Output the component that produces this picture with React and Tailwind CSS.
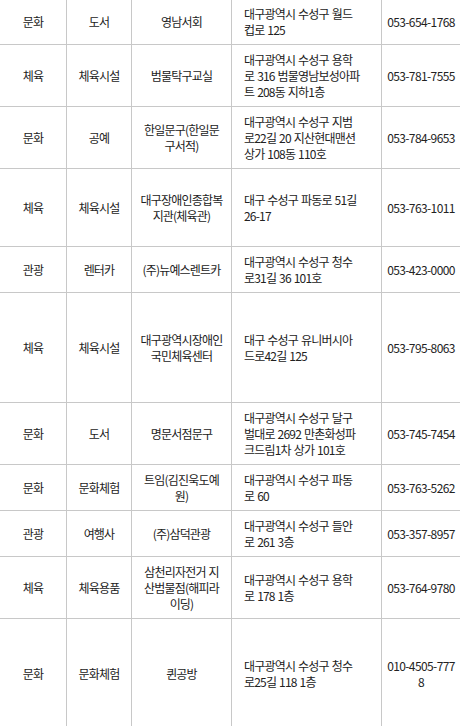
import React from "react";

const rows = [
  { h: "h-[45px]", type: "문화", sub: "도서", name: ["영남서회"], addr: ["대구광역시 수성구 월드", "컵로 125"], tel: ["053-654-1768"] },
  { h: "h-[62px]", type: "체육", sub: "체육시설", name: ["범물탁구교실"], addr: ["대구광역시 수성구 용학", "로 316 범물영남보성아파", "트 208동 지하1층"], tel: ["053-781-7555"] },
  { h: "h-[62px]", type: "문화", sub: "공예", name: ["한일문구(한일문", "구서적)"], addr: ["대구광역시 수성구 지범", "로22길 20 지산현대맨션", "상가 108동 110호"], tel: ["053-784-9653"] },
  { h: "h-[78px]", type: "체육", sub: "체육시설", name: ["대구장애인종합복", "지관(체육관)"], addr: ["대구 수성구 파동로 51길", "26-17"], tel: ["053-763-1011"] },
  { h: "h-[46px]", type: "관광", sub: "렌터카", name: ["(주)뉴예스렌트카"], addr: ["대구광역시 수성구 청수", "로31길 36 101호"], tel: ["053-423-0000"] },
  { h: "h-[110px]", type: "체육", sub: "체육시설", name: ["대구광역시장애인", "국민체육센터"], addr: ["대구 수성구 유니버시아", "드로42길 125"], tel: ["053-795-8063"] },
  { h: "h-[62px]", type: "문화", sub: "도서", name: ["명문서점문구"], addr: ["대구광역시 수성구 달구", "벌대로 2692 만촌화성파", "크드림1차 상가 101호"], tel: ["053-745-7454"] },
  { h: "h-[46px]", type: "문화", sub: "문화체험", name: ["트임(김진욱도예", "원)"], addr: ["대구광역시 수성구 파동", "로 60"], tel: ["053-763-5262"] },
  { h: "h-[46px]", type: "관광", sub: "여행사", name: ["(주)삼덕관광"], addr: ["대구광역시 수성구 들안", "로 261 3층"], tel: ["053-357-8957"] },
  { h: "h-[62px]", type: "체육", sub: "체육용품", name: ["삼천리자전거 지", "산범물점(해피라", "이딩)"], addr: ["대구광역시 수성구 용학", "로 178 1층"], tel: ["053-764-9780"] },
  { h: "h-[110px]", type: "문화", sub: "문화체험", name: ["퀸공방"], addr: ["대구광역시 수성구 청수", "로25길 118 1층"], tel: ["010-4505-777", "8"] },
];

const Lines = ({ lines }) =>
  lines.map((l, i) => (
    <React.Fragment key={i}>
      {i > 0 && <br />}
      {l}
    </React.Fragment>
  ));

export default function App() {
  return (
    <div
      className="w-[460px] bg-white text-[12px] leading-[16px] text-[#222] tracking-[-0.8px] [word-spacing:1px]"
      style={{ fontFamily: '"Noto Sans CJK KR", "Noto Sans", sans-serif' }}
    >
      {rows.map((r, i) => (
        <div
          key={i}
          className={`grid grid-cols-[67px_65px_100px_150px_1fr] border-b border-[#c8c8c8] ${r.h}`}
        >
          <div className="flex items-center justify-center border-r border-[#c8c8c8] whitespace-nowrap">
            {r.type}
          </div>
          <div className="flex items-center justify-center border-r border-[#c8c8c8] whitespace-nowrap">
            {r.sub}
          </div>
          <div className="flex items-center justify-center border-r border-[#c8c8c8] text-center whitespace-nowrap">
            <div>
              <Lines lines={r.name} />
            </div>
          </div>
          <div className="flex items-center border-r border-[#c8c8c8] px-3 whitespace-nowrap">
            <div>
              <Lines lines={r.addr} />
            </div>
          </div>
          <div className="flex items-center justify-center text-center whitespace-nowrap tracking-[-0.6px]">
            <div>
              <Lines lines={r.tel} />
            </div>
          </div>
        </div>
      ))}
    </div>
  );
}
